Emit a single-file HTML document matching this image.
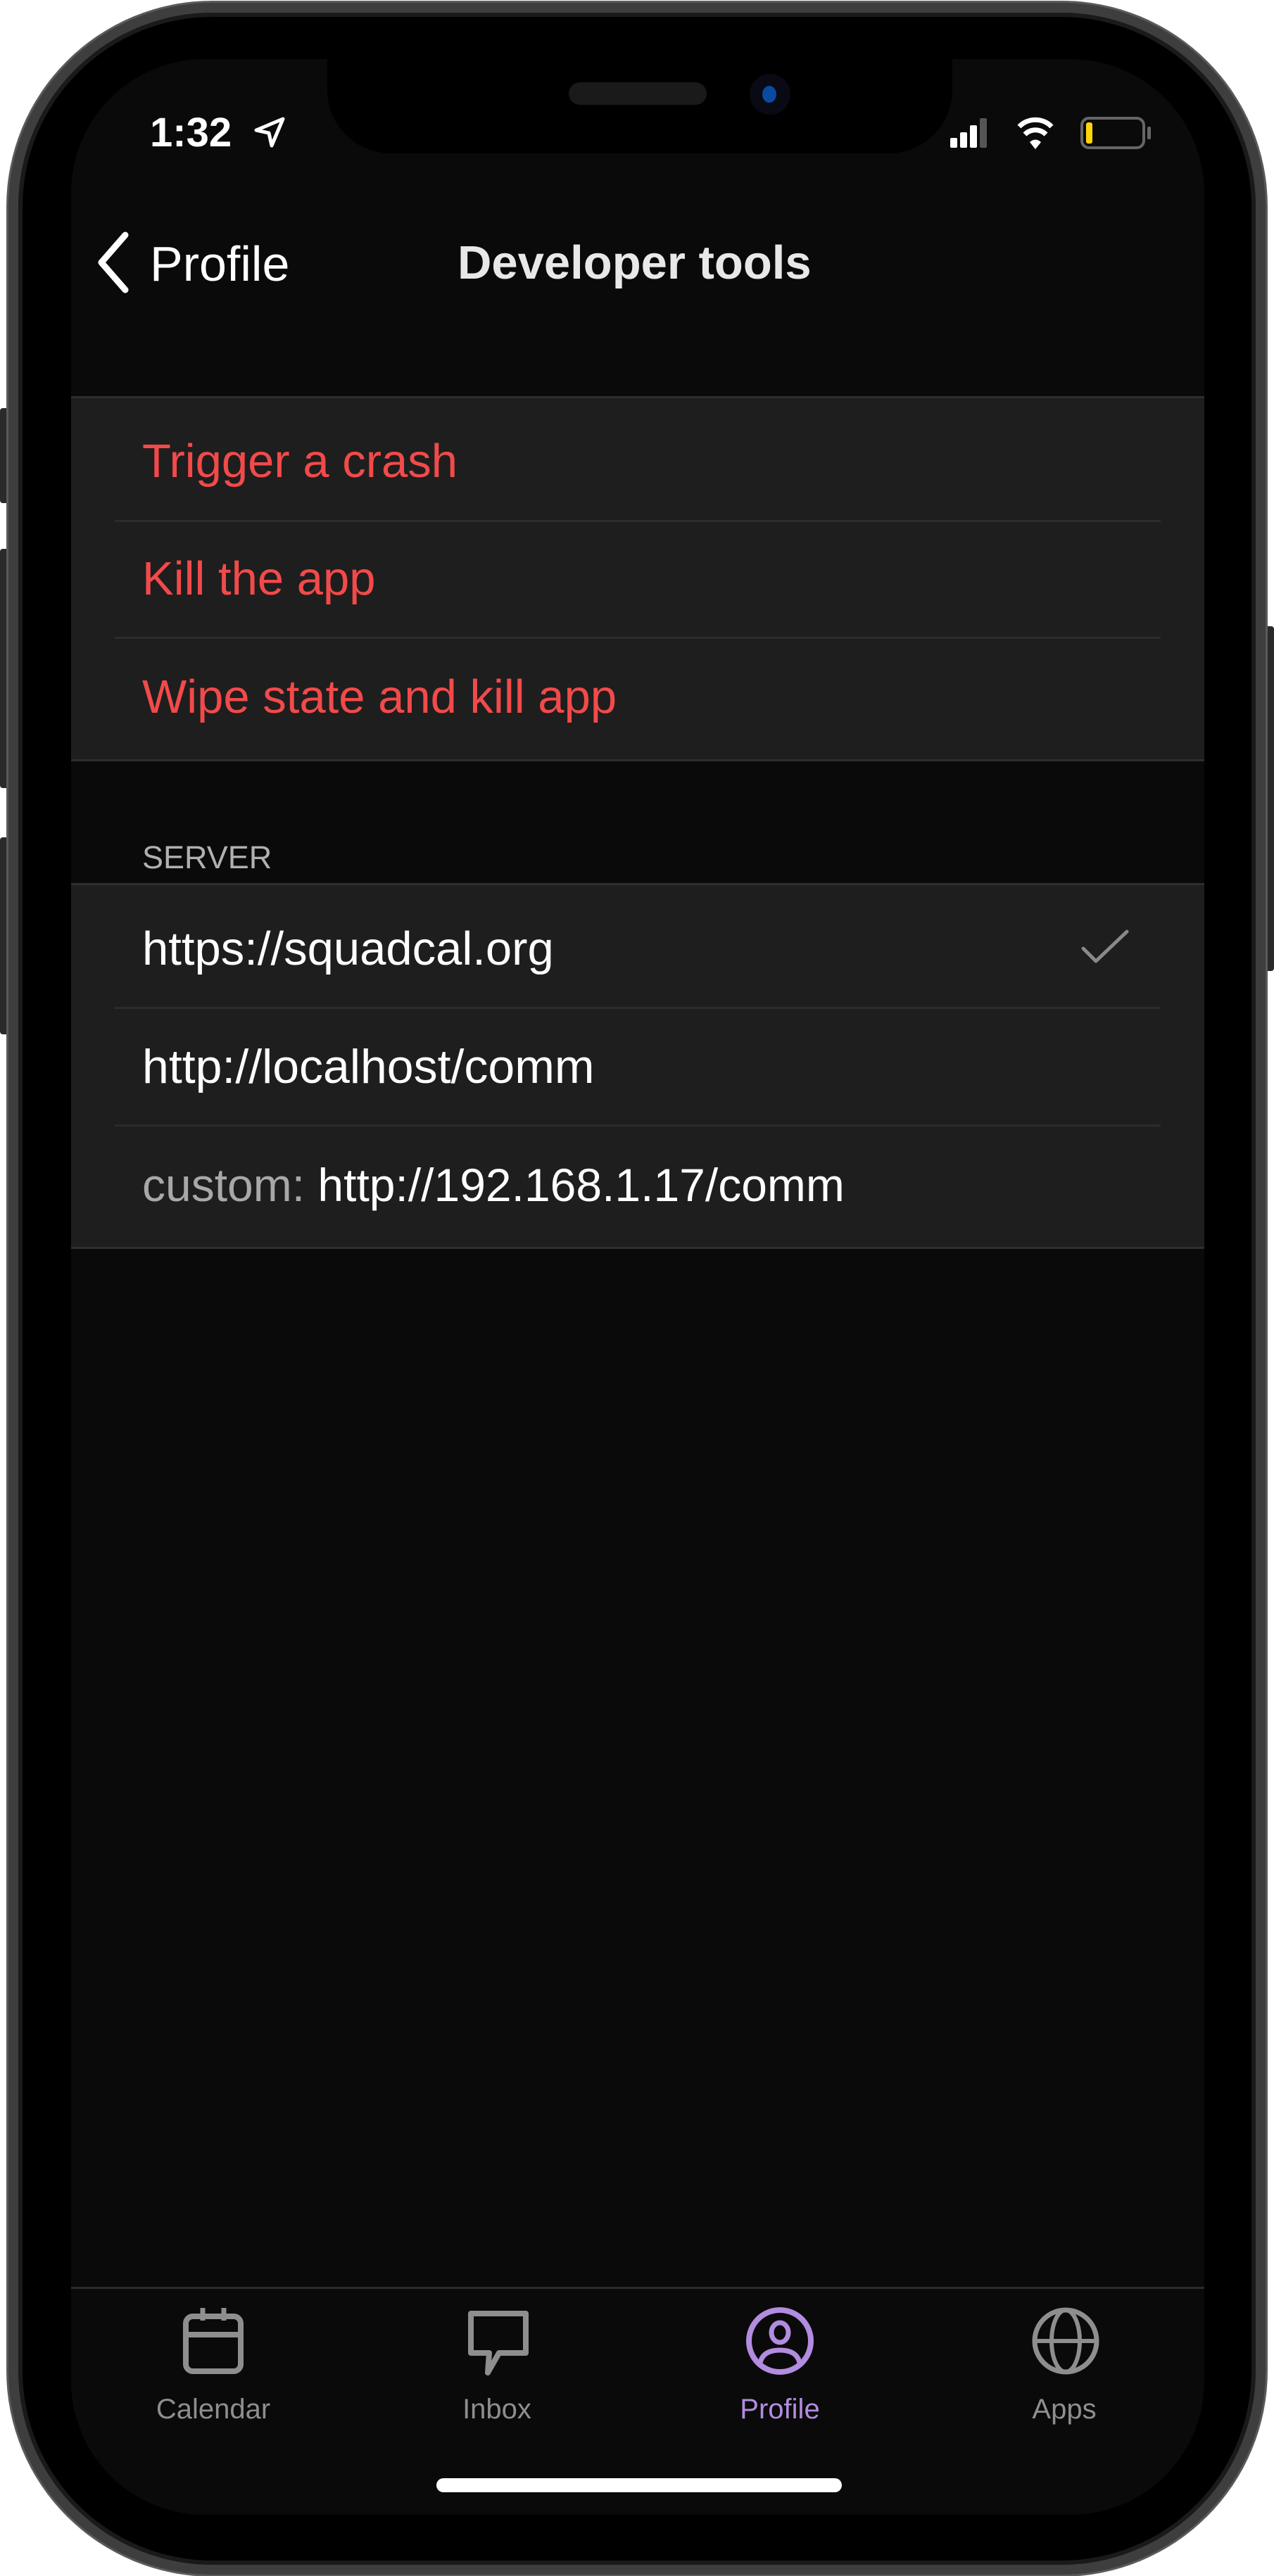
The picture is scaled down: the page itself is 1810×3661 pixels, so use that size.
<!DOCTYPE html>
<html><head><meta charset="utf-8"><style>
*{margin:0;padding:0;box-sizing:border-box}
body{width:1810px;height:3661px;background:#fff;position:relative;overflow:hidden;font-family:"Liberation Sans",sans-serif}
.abs{position:absolute}
.frame{left:12px;top:4px;width:1786px;height:3655px;border-radius:290px;background:#000;border:14px solid #3e3e3e;box-shadow:inset 0 0 0 6px #1a1a1a, 0 0 0 3px #5a5a5a}
.screen{left:101px;top:84px;width:1610px;height:3490px;border-radius:190px;background:#0a0a0a;overflow:hidden}
.notch{left:465px;top:84px;width:888px;height:134px;background:#000;border-radius:0 0 90px 90px}
.t{position:absolute;white-space:nowrap;line-height:1}
.grp{position:absolute;left:101px;width:1610px;background:#1e1e1e;border-top:3px solid #2e2e2e;border-bottom:3px solid #2e2e2e}
.sep{position:absolute;left:163px;width:1486px;height:3px;background:#2c2c2c}
.red{color:#f24a4a;font-size:67px}
.wh{color:#fff;font-size:67px}
.lbl{font-size:40px;color:#8e8e8e;transform:translateX(-50%)}
.btn{position:absolute;background:#2a2a2a;border-radius:4px}
</style></head><body>
<div class="btn" style="left:0;top:580px;width:14px;height:135px"></div>
<div class="btn" style="left:0;top:780px;width:14px;height:340px"></div>
<div class="btn" style="left:0;top:1190px;width:14px;height:280px"></div>
<div class="btn" style="left:1796px;top:890px;width:14px;height:490px"></div>
<div class="abs frame"></div>
<div class="abs screen"></div>
<div class="abs notch"></div>
<div class="abs" style="left:808px;top:117px;width:196px;height:32px;border-radius:16px;background:#1a1a1a"></div>
<div class="abs" style="left:1065px;top:105px;width:58px;height:58px;border-radius:50%;background:#0a0a14"></div>
<div class="abs" style="left:1083px;top:122px;width:20px;height:24px;border-radius:50%;background:#0a4aa0"></div>

<div class="t" style="left:213px;top:160px;font-size:58px;color:#fff;font-weight:bold">1:32</div>
<svg class="abs" style="left:358px;top:163px" width="50" height="50" viewBox="0 0 50 50"><path d="M44 6 L6 22 L24 26 L28 44 Z" fill="none" stroke="#fff" stroke-width="5" stroke-linejoin="round"/></svg>
<div class="abs" style="left:1350px;top:196px;width:10px;height:14px;background:#fff;border-radius:2px"></div>
<div class="abs" style="left:1364px;top:188px;width:10px;height:22px;background:#fff;border-radius:2px"></div>
<div class="abs" style="left:1378px;top:178px;width:10px;height:32px;background:#fff;border-radius:2px"></div>
<div class="abs" style="left:1392px;top:168px;width:10px;height:42px;background:#555;border-radius:2px"></div>
<svg class="abs" style="left:1444px;top:160px" width="54" height="56" viewBox="0 0 54 56"><path d="M4 20 A32 32 0 0 1 50 20" fill="none" stroke="#fff" stroke-width="7"/><path d="M12 31 A21 21 0 0 1 42 31" fill="none" stroke="#fff" stroke-width="7"/><path d="M19 42 L27 52 L35 42 A11 11 0 0 0 19 42Z" fill="#fff"/></svg>
<div class="abs" style="left:1535px;top:166px;width:92px;height:46px;border:4px solid #666;border-radius:12px"></div>
<div class="abs" style="left:1543px;top:174px;width:9px;height:30px;background:#ffd60a;border-radius:3px"></div>
<div class="abs" style="left:1630px;top:180px;width:5px;height:18px;background:#666;border-radius:2px"></div>

<svg class="abs" style="left:132px;top:328px" width="60" height="90" viewBox="0 0 60 90"><path d="M46 6 L12 45 L46 84" fill="none" stroke="#fff" stroke-width="9" stroke-linecap="round" stroke-linejoin="round"/></svg>
<div class="t" style="left:213px;top:340px;font-size:70px;color:#fff">Profile</div>
<div class="t" style="left:650px;top:340px;font-size:67px;color:#e8e8e8;font-weight:bold">Developer tools</div>

<div class="grp" style="top:563px;height:519px"></div>
<div class="sep" style="top:739px"></div>
<div class="sep" style="top:905px"></div>
<div class="t red" style="left:202px;top:622px">Trigger a crash</div>
<div class="t red" style="left:202px;top:789px">Kill the app</div>
<div class="t red" style="left:202px;top:957px">Wipe state and kill app</div>

<div class="t" style="left:202px;top:1196px;font-size:45px;color:#b0b0b0">SERVER</div>

<div class="grp" style="top:1255px;height:520px"></div>
<div class="sep" style="top:1431px"></div>
<div class="sep" style="top:1598px"></div>
<div class="t wh" style="left:202px;top:1315px;font-size:67px">https://squadcal.org</div>
<div class="t wh" style="left:202px;top:1482px;font-size:68px">http://localhost/comm</div>
<div class="t wh" style="left:202px;top:1651px;font-size:66px"><span style="color:#a8a8a8">custom:</span> http://192.168.1.17/comm</div>
<svg class="abs" style="left:1535px;top:1320px" width="70" height="52" viewBox="0 0 70 52"><path d="M4 28 L22 46 L66 4" fill="none" stroke="#8a8a8a" stroke-width="5" stroke-linecap="round" stroke-linejoin="round"/></svg>

<div class="abs" style="left:101px;top:3250px;width:1610px;height:3px;background:#2c2c2c"></div>
<svg class="abs" style="left:258px;top:3278px" width="90" height="98" viewBox="0 0 90 98"><rect x="6" y="14" width="78" height="78" rx="10" fill="none" stroke="#8e8e8e" stroke-width="8"/><line x1="6" y1="40" x2="84" y2="40" stroke="#8e8e8e" stroke-width="8"/><line x1="30" y1="2" x2="30" y2="20" stroke="#8e8e8e" stroke-width="7"/><line x1="60" y1="2" x2="60" y2="20" stroke="#8e8e8e" stroke-width="7"/></svg>
<svg class="abs" style="left:663px;top:3282px" width="90" height="96" viewBox="0 0 90 96"><path d="M6 6 H84 V62 H46 L30 90 L32 62 H6 Z" fill="none" stroke="#8e8e8e" stroke-width="8" stroke-linejoin="round"/></svg>
<svg class="abs" style="left:1058px;top:3278px" width="100" height="98" viewBox="0 0 100 98"><circle cx="50" cy="49" r="44" fill="none" stroke="#b28ce0" stroke-width="8"/><ellipse cx="50" cy="37" rx="12" ry="14" fill="none" stroke="#b28ce0" stroke-width="7"/><path d="M22 80 Q26 62 50 62 Q74 62 78 80" fill="none" stroke="#b28ce0" stroke-width="7"/></svg>
<svg class="abs" style="left:1464px;top:3278px" width="100" height="98" viewBox="0 0 100 98"><circle cx="50" cy="49" r="44" fill="none" stroke="#8e8e8e" stroke-width="7"/><ellipse cx="50" cy="49" rx="20" ry="44" fill="none" stroke="#8e8e8e" stroke-width="6"/><line x1="6" y1="49" x2="94" y2="49" stroke="#8e8e8e" stroke-width="6"/></svg>
<div class="t lbl" style="left:303px;top:3404px">Calendar</div>
<div class="t lbl" style="left:706px;top:3404px">Inbox</div>
<div class="t lbl" style="left:1108px;top:3404px;color:#b28ce0">Profile</div>
<div class="t lbl" style="left:1512px;top:3404px">Apps</div>
<div class="abs" style="left:620px;top:3522px;width:576px;height:20px;border-radius:10px;background:#fff"></div>
</body></html>
